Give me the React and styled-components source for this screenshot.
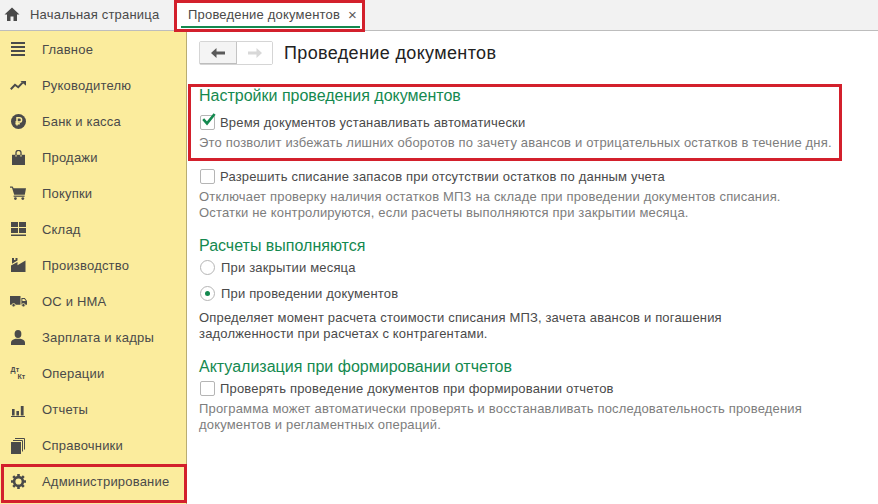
import { styled, createGlobalStyle } from "styled-components";

const GlobalStyle = createGlobalStyle`
  html, body {
    margin: 0;
    padding: 0;
    background: #fff;
  }
  body {
    font-family: "Liberation Sans", Arial, sans-serif;
    font-size: 13px;
    color: #4b4b4b;
  }
`;

const ICON = "#4a4a4a";
const SIDEBAR = "#fbec9d";

const HomeIcon = () => (
  <svg width="16" height="14" viewBox="0 0 16 14">
    <path d="M8 .5 .5 7.5H3V14h3.5V9.5h3V14H13V7.5h2.5z" fill={ICON} />
  </svg>
);

const MenuIcon = () => (
  <svg width="14" height="14" viewBox="0 0 14 14">
    <path d="M0 0h14v2H0zM0 4h14v2H0zM0 8h14v2H0zM0 12h14v2H0z" fill={ICON} />
  </svg>
);

const TrendIcon = () => (
  <svg width="16" height="9" viewBox="0 0 16 9">
    <path d="M.8 8.2 5 3.8l3.2 2.4L12.6 1.6" fill="none" stroke={ICON} strokeWidth="2" />
    <path d="M10.4 0H16v4.8z" fill={ICON} />
  </svg>
);

const RubleIcon = () => (
  <svg width="15" height="15" viewBox="0 0 15 15">
    <circle cx="7.5" cy="7.5" r="7.5" fill={ICON} />
    <path d="M6 11.5V3.8h2.5a2.1 2.1 0 0 1 0 4.2H4.4M4.4 9.8h4.4" fill="none" stroke={SIDEBAR} strokeWidth="1.5" />
  </svg>
);

const BagIcon = () => (
  <svg width="13" height="15" viewBox="0 0 13 15">
    <path d="M0 4.8h13V15H0z" fill={ICON} />
    <path d="M4 6.5V2.6a2.5 2.2 0 0 1 5 0v3.9" fill="none" stroke={ICON} strokeWidth="1.3" />
    <path d="M4 5.2v1.4M9 5.2v1.4" stroke={SIDEBAR} strokeWidth="1.3" />
  </svg>
);

const CartIcon = () => (
  <svg width="16" height="14" viewBox="0 0 16 14">
    <path d="M0 .5h2.6l1 1.7H16l-1.2 6.6H4.2L2 1.8H0z" fill={ICON} />
    <path d="M3.6 9.6h11v1.2h-11z" fill={ICON} />
    <circle cx="5.4" cy="12.6" r="1.4" fill={ICON} />
    <circle cx="12.8" cy="12.6" r="1.4" fill={ICON} />
  </svg>
);

const StockIcon = () => (
  <svg width="15" height="14" viewBox="0 0 15 14">
    <path d="M0 0h7v5H0zM8 0h7v5H8zM0 6h7v5H0zM8 6h7v5H8zM0 12.4h15V14H0z" fill={ICON} />
  </svg>
);

const FactoryIcon = () => (
  <svg width="15" height="14" viewBox="0 0 15 14">
    <path d="M1 0h2v2h1.5V0h2v2.6L1 5.8z" fill={ICON} />
    <path d="M0 7.6 6.5 4v3.2L14.5 2.5V14H0z" fill={ICON} />
  </svg>
);

const TruckIcon = () => (
  <svg width="17" height="11" viewBox="0 0 17 11">
    <path d="M0 0h10.5v8.8H0zM11.4 2h3.4L17 5v3.8h-5.6z" fill={ICON} />
    <path d="M12.4 3h2l1.4 2h-3.4z" fill={SIDEBAR} />
    <circle cx="3.6" cy="9.2" r="1.7" fill={ICON} stroke={SIDEBAR} strokeWidth=".8" />
    <circle cx="13.4" cy="9.2" r="1.7" fill={ICON} stroke={SIDEBAR} strokeWidth=".8" />
  </svg>
);

const PersonIcon = () => (
  <svg width="14" height="15" viewBox="0 0 14 15">
    <ellipse cx="7" cy="4" rx="3.4" ry="4" fill={ICON} />
    <path d="M0 15v-2.5C0 10.5 2.5 9.4 4.6 8.8h4.8c2.1.6 4.6 1.7 4.6 3.7V15z" fill={ICON} />
  </svg>
);

const DebitCreditIcon = () => (
  <DebitCredit>
    <span>Дт</span>
    <span>Кт</span>
  </DebitCredit>
);

const ChartIcon = () => (
  <svg width="14" height="15" viewBox="0 -3 14 15">
    <path d="M1 4h2.6v6.6H1zM5.4 6h2.6v4.6H5.4zM9.8 1H12.6v9.6H9.8zM0 11h14v1H0z" fill={ICON} />
  </svg>
);

const BooksIcon = () => (
  <svg width="15" height="18" viewBox="0 -2 15 18">
    <path d="M0 4h10v12H0z" fill={ICON} />
    <path d="M2 2.5h9.5v11M4 .5h9.5v11" fill="none" stroke={ICON} strokeWidth="1" />
  </svg>
);

const GearIcon = () => (
  <svg width="15" height="15" viewBox="0 0 15 15">
    <circle cx="7.5" cy="7.5" r="4.4" fill="none" stroke={ICON} strokeWidth="2.6" />
    <path
      d="M6.2 0h2.6v3H6.2zM6.2 12h2.6v3H6.2zM0 6.2h3v2.6H0zM12 6.2h3v2.6h-3zM1.3 3.1 3.1 1.3l2 2-1.8 1.8zM9.9 11.7l1.8-1.8 2 2-1.8 1.8zM11.9 1.3l1.8 1.8-2 2-1.8-1.8zM3.3 9.9l1.8 1.8-2 2-1.8-1.8z"
      fill={ICON}
    />
  </svg>
);

const ArrowIcon = ({ $flip, color }) => (
  <ArrowSvg $flip={$flip} width="14" height="10" viewBox="0 0 14 10">
    <path d="M5.5 0 0 5l5.5 5V6.6H14V3.4H5.5z" fill={color} />
  </ArrowSvg>
);

const CheckIcon = () => (
  <svg width="14" height="13" viewBox="0 0 14 13">
    <path d="M1.2 6.2 5 10.4 12.6 1" fill="none" stroke="#14894f" strokeWidth="2.6" />
  </svg>
);

const menuItems = [
  { label: "Главное", Icon: MenuIcon },
  { label: "Руководителю", Icon: TrendIcon },
  { label: "Банк и касса", Icon: RubleIcon },
  { label: "Продажи", Icon: BagIcon },
  { label: "Покупки", Icon: CartIcon },
  { label: "Склад", Icon: StockIcon },
  { label: "Производство", Icon: FactoryIcon },
  { label: "ОС и НМА", Icon: TruckIcon },
  { label: "Зарплата и кадры", Icon: PersonIcon },
  { label: "Операции", Icon: DebitCreditIcon },
  { label: "Отчеты", Icon: ChartIcon },
  { label: "Справочники", Icon: BooksIcon },
  { label: "Администрирование", Icon: GearIcon, marked: true },
];

function Checkbox({ checked, label, top }) {
  return (
    <OptionRow $top={top}>
      <CheckBoxFrame>{checked && <CheckIcon />}</CheckBoxFrame>
      <span>{label}</span>
    </OptionRow>
  );
}

function Radio({ checked, label, top }) {
  return (
    <RadioRow $top={top}>
      <RadioFrame>{checked && <RadioDot />}</RadioFrame>
      <span>{label}</span>
    </RadioRow>
  );
}

export default function App() {
  return (
    <Page>
      <GlobalStyle />
      <TopBar>
        <HomeTab>
          <HomeIcon />
          <span>Начальная страница</span>
        </HomeTab>
        <ActiveTab>
          <span>Проведение документов</span>
          <CloseMark>×</CloseMark>
        </ActiveTab>
      </TopBar>
      <Body>
        <Sidebar>
          {menuItems.map(({ label, Icon, marked }) => (
            <MenuItem key={label} $marked={marked}>
              <MenuIconSlot>
                <Icon />
              </MenuIconSlot>
              <span>{label}</span>
            </MenuItem>
          ))}
        </Sidebar>
        <Content>
          <TitleRow>
            <NavGroup>
              <NavButton $pressed>
                <ArrowIcon color="#5a5a5a" />
              </NavButton>
              <NavButton>
                <ArrowIcon $flip color="#d8d8d8" />
              </NavButton>
            </NavGroup>
            <Title>Проведение документов</Title>
          </TitleRow>

          <MarkedSection>
            <SectionTitle>Настройки проведения документов</SectionTitle>
            <Checkbox top={9} checked label="Время документов устанавливать автоматически" />
            <Hint $top={5}>
              Это позволит избежать лишних оборотов по зачету авансов и отрицательных остатков в течение дня.
            </Hint>
          </MarkedSection>

          <Section $top={17}>
            <Checkbox top={8} label="Разрешить списание запасов при отсутствии остатков по данным учета" />
            <Hint $top={5}>
              Отключает проверку наличия остатков МПЗ на складе при проведении документов списания.
              <br />
              Остатки не контролируются, если расчеты выполняются при закрытии месяца.
            </Hint>
          </Section>

          <Section $top={16}>
            <SectionTitle>Расчеты выполняются</SectionTitle>
            <Radio top={4} label="При закрытии месяца" />
            <Radio top={10} checked label="При проведении документов" />
            <Hint $top={9} $dark>
              Определяет момент расчета стоимости списания МПЗ, зачета авансов и погашения
              <br />
              задолженности при расчетах с контрагентами.
            </Hint>
          </Section>

          <Section $top={16}>
            <SectionTitle>Актуализация при формировании отчетов</SectionTitle>
            <Checkbox top={4} label="Проверять проведение документов при формировании отчетов" />
            <Hint $top={5}>
              Программа может автоматически проверять и восстанавливать последовательность проведения
              <br />
              документов и регламентных операций.
            </Hint>
          </Section>
        </Content>
      </Body>
    </Page>
  );
}

const Page = styled.div`
  width: 878px;
  height: 504px;
  overflow: hidden;
  display: flex;
  flex-direction: column;
  background: #fff;
`;

const ArrowSvg = styled.svg`
  transform: ${(props) => (props.$flip ? "scaleX(-1)" : "none")};
`;

const TopBar = styled.div`
  height: 31px;
  flex: none;
  display: flex;
  align-items: stretch;
  background: #f2f2f2;
  border-bottom: 1px solid #bdbdbd;
  box-sizing: border-box;
`;

const HomeTab = styled.div`
  width: 174px;
  box-sizing: border-box;
  padding: 0 0 2px 4px;
  display: flex;
  align-items: center;
  gap: 10px;
  font-size: 13px;
  letter-spacing: 0.2px;
  color: #4a4a4a;
`;

const ActiveTab = styled.div`
  position: relative;
  width: 191px;
  box-sizing: border-box;
  padding: 0 0 2px 14px;
  display: flex;
  align-items: center;
  gap: 8px;
  background: #fff;
  font-size: 13px;
  letter-spacing: 0.2px;
  color: #4a4a4a;

  &::before {
    content: "";
    position: absolute;
    left: 7px;
    right: 5px;
    bottom: 2px;
    height: 2px;
    background: #14894f;
  }

  &::after {
    content: "";
    position: absolute;
    inset: 0 0 -2px 0;
    border: 3px solid #d3202c;
  }
`;

const CloseMark = styled.span`
  font-size: 15px;
  color: #5a5a5a;
`;

const Body = styled.div`
  flex: 1;
  display: flex;
  min-height: 0;
`;

const Sidebar = styled.nav`
  width: 187px;
  flex: none;
  box-sizing: border-box;
  background: ${SIDEBAR};
  border-right: 1px solid #b9ad72;
`;

const MenuItem = styled.div`
  position: relative;
  height: 36px;
  display: flex;
  align-items: center;
  font-size: 13px;
  letter-spacing: 0.2px;
  color: #4a4a4a;

  ${(props) =>
    props.$marked &&
    `
    &::after {
      content: "";
      position: absolute;
      inset: 1px -1px -4px 1px;
      border: 3px solid #d3202c;
    }
  `}
`;

const MenuIconSlot = styled.div`
  width: 42px;
  flex: none;
  box-sizing: border-box;
  display: flex;
  justify-content: center;
  padding-right: 6px;
`;

const DebitCredit = styled.div`
  width: 15px;
  display: flex;
  flex-direction: column;
  font-size: 7px;
  font-weight: bold;
  line-height: 7px;
  color: ${ICON};

  span:last-child {
    align-self: flex-end;
  }
`;

const Content = styled.main`
  flex: 1;
  min-width: 0;
  padding: 10px 0 0 12px;
`;

const TitleRow = styled.div`
  display: flex;
  align-items: center;
  gap: 11px;
  height: 24px;
`;

const NavGroup = styled.div`
  display: flex;
  border: 1px solid #d5d5d5;
  border-radius: 2px;
`;

const NavButton = styled.div`
  width: ${(props) => (props.$pressed ? "37px" : "35px")};
  height: 22px;
  display: flex;
  align-items: center;
  justify-content: center;
  box-sizing: border-box;
  background: ${(props) => (props.$pressed ? "#f4f4f4" : "#fff")};
  border-right: ${(props) => (props.$pressed ? "1px solid #c4c4c4" : "none")};
  border-bottom: ${(props) => (props.$pressed ? "1px solid #bdbdbd" : "none")};
`;

const Title = styled.h1`
  margin: 0;
  font-size: 18px;
  font-weight: normal;
  letter-spacing: 0.36px;
  color: #222;
`;

const MarkedSection = styled.section`
  position: relative;
  margin-top: 22px;

  &::after {
    content: "";
    position: absolute;
    inset: -3px auto -10px -11px;
    width: 654px;
    box-sizing: border-box;
    border: 3px solid #d3202c;
    pointer-events: none;
  }
`;

const Section = styled.section`
  margin-top: ${(props) => props.$top}px;
`;

const SectionTitle = styled.h2`
  margin: 0;
  font-size: 16px;
  font-weight: normal;
  line-height: 18px;
  color: #14894f;
`;

const OptionRow = styled.div`
  margin-top: ${(props) => props.$top}px;
  display: flex;
  align-items: center;
  gap: 5px;
  height: 16px;
  font-size: 13px;
  letter-spacing: 0.17px;
  color: #4a4a4a;
`;

const CheckBoxFrame = styled.div`
  width: 15px;
  height: 15px;
  flex: none;
  box-sizing: border-box;
  position: relative;
  margin-left: 1px;
  border: 1px solid #b5b5b5;
  border-radius: 2px;
  background: #fff;

  svg {
    position: absolute;
    left: 1px;
    top: -3px;
  }
`;

const RadioRow = styled.div`
  margin-top: ${(props) => props.$top}px;
  display: flex;
  align-items: center;
  gap: 6px;
  height: 16px;
  font-size: 13px;
  letter-spacing: 0.17px;
  color: #4a4a4a;
`;

const RadioFrame = styled.div`
  width: 13px;
  height: 13px;
  flex: none;
  margin-left: 1px;
  display: flex;
  align-items: center;
  justify-content: center;
  border: 1px solid #b5b5b5;
  border-radius: 50%;
`;

const RadioDot = styled.div`
  width: 5px;
  height: 5px;
  border-radius: 50%;
  background: #14894f;
`;

const Hint = styled.p`
  margin: ${(props) => props.$top}px 0 0;
  font-size: 13px;
  line-height: 16px;
  letter-spacing: 0.17px;
  color: ${(props) => (props.$dark ? "#4a4a4a" : "#7d7d7d")};
`;
